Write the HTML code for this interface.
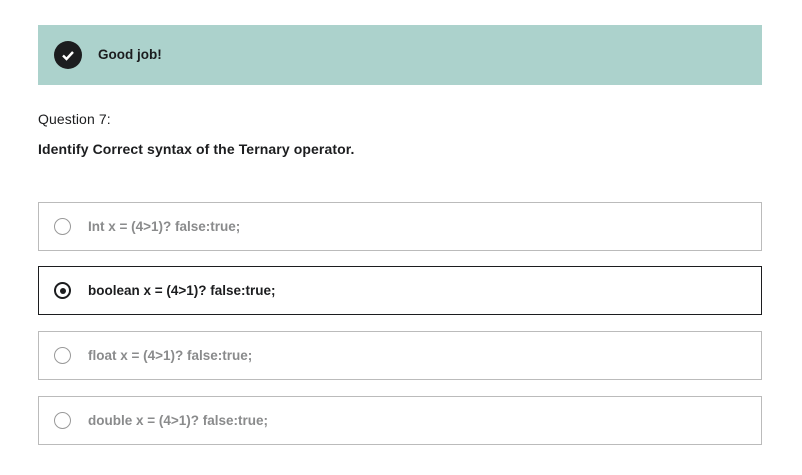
<!DOCTYPE html>
<html><head><style>
body{margin:0;width:802px;height:475px;background:#fff;font-family:"Liberation Sans",sans-serif;position:relative;overflow:hidden;color:#1c1d1f}
.banner{position:absolute;left:38px;top:25px;width:724px;height:60px;background:#acd2cc}
.chk{position:absolute;left:16px;top:16px;width:28px;height:28px;border-radius:50%;background:#1c1d1f}
.banner b{position:absolute;left:60px;top:22px;font-size:13.5px}
.q{position:absolute;left:38px;top:111px;font-size:14px;letter-spacing:0.1px}
.t{position:absolute;left:38px;top:141px;font-size:14px;font-weight:bold;letter-spacing:0.1px}
.opt{position:absolute;left:38px;width:722px;height:47px;border:1px solid #bbb;font-size:13.5px;font-weight:bold;color:#8a8b8c;letter-spacing:0px}
.opt.sel{border-color:#1c1d1f;color:#1c1d1f}
.r{position:absolute;left:15px;top:15px;width:17px;height:17px;border:1.5px solid #999;border-radius:50%;box-sizing:border-box}
.sel .r{border:2px solid #1c1d1f}
.sel .r:after{content:"";position:absolute;left:3.5px;top:3.5px;width:6px;height:6px;border-radius:50%;background:#1c1d1f}
.opt span{position:absolute;left:49px;top:16px}
</style></head><body>
<div class="banner"><div class="chk"><svg width="28" height="28"><path d="M9 14.5l3.5 3.5 6.5-7" fill="none" stroke="#fff" stroke-width="2.4"/></svg></div><b>Good job!</b></div>
<div class="q">Question 7:</div>
<div class="t">Identify Correct syntax of the Ternary operator.</div>
<div class="opt" style="top:202px"><div class="r"></div><span>Int x = (4&gt;1)? false:true;</span></div>
<div class="opt sel" style="top:266px"><div class="r"></div><span>boolean x = (4&gt;1)? false:true;</span></div>
<div class="opt" style="top:331px"><div class="r"></div><span>float x = (4&gt;1)? false:true;</span></div>
<div class="opt" style="top:396px"><div class="r"></div><span>double x = (4&gt;1)? false:true;</span></div>
</body></html>
